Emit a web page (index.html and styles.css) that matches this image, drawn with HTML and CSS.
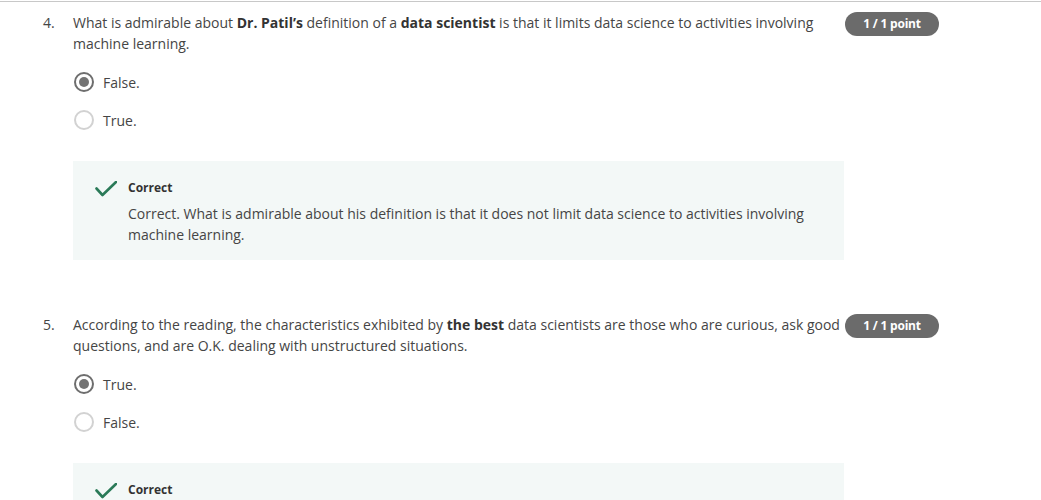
FILE: index.html
```html
<!DOCTYPE html>
<html>
<head>
<meta charset="utf-8">
<link rel="stylesheet" href="styles.css">
</head>
<body>
<div class="page">
  <section class="question">
    <div class="q-head">
      <div class="q-num">4.</div>
      <div class="q-text">What is admirable about <b>Dr. Patil’s</b> definition of a <b>data scientist</b> is that it limits data science to activities involving machine learning.</div>
      <div class="badge">1 / 1 point</div>
    </div>
    <div class="options">
      <div class="option"><span class="radio checked"></span><span>False.</span></div>
      <div class="option"><span class="radio"></span><span>True.</span></div>
    </div>
    <div class="feedback">
      <svg class="check" width="22" height="16" viewBox="0 0 22 16"><path d="M1.5 7.5 L7.5 14 L21 1" fill="none" stroke="#2a7a58" stroke-width="2.6" stroke-linecap="round" stroke-linejoin="round"/></svg>
      <div class="fb-body">
        <div class="fb-label">Correct</div>
        <div class="fb-text">Correct. What is admirable about his definition is that it does not limit data science to activities involving machine learning.</div>
      </div>
    </div>
  </section>
  <section class="question">
    <div class="q-head">
      <div class="q-num">5.</div>
      <div class="q-text">According to the reading, the characteristics exhibited by <b>the best</b> data scientists are those who are curious, ask good questions, and are O.K. dealing with unstructured situations.</div>
      <div class="badge">1 / 1 point</div>
    </div>
    <div class="options">
      <div class="option"><span class="radio checked"></span><span>True.</span></div>
      <div class="option"><span class="radio"></span><span>False.</span></div>
    </div>
    <div class="feedback">
      <svg class="check" width="22" height="16" viewBox="0 0 22 16"><path d="M1.5 7.5 L7.5 14 L21 1" fill="none" stroke="#2a7a58" stroke-width="2.6" stroke-linecap="round" stroke-linejoin="round"/></svg>
      <div class="fb-body">
        <div class="fb-label">Correct</div>
      </div>
    </div>
  </section>
</div>
</body>
</html>
```

FILE: styles.css
```css
html, body {
  margin: 0;
  padding: 0;
  background: #fff;
}
body {
  font-family: "Open Sans", "Liberation Sans", sans-serif;
  color: #454545;
  font-size: 14px;
  line-height: 21px;
  overflow: hidden;
  height: 500px;
}
.page {
  border-top: 1px solid #c8c8c8;
  margin-top: 1px;
  padding-top: 10px;
}
.question {
  padding-left: 43px;
  margin-bottom: 54px;
}
.q-head {
  display: flex;
  align-items: flex-start;
}
.q-num {
  width: 30px;
  flex: none;
}
.q-text {
  width: 768px;
  flex: none;
}
.q-text b {
  font-weight: 700;
  color: #333;
}
.badge {
  flex: none;
  margin-left: 4px;
  width: 94px;
  height: 24px;
  border-radius: 12px;
  background: #6b6b6b;
  color: #fff;
  font-weight: 700;
  font-size: 12px;
  line-height: 24px;
  text-align: center;
  letter-spacing: -0.2px;
}
.options {
  margin-left: 31px;
  margin-top: 18px;
  display: flex;
  flex-direction: column;
  gap: 18px;
}
.option {
  display: flex;
  align-items: center;
  height: 20px;
  gap: 9px;
}
.radio {
  box-sizing: border-box;
  width: 20px;
  height: 20px;
  border-radius: 50%;
  border: 2px solid #d2d2d2;
  display: flex;
  align-items: center;
  justify-content: center;
  flex: none;
}
.radio.checked {
  border: 2px solid #6e6e6e;
}
.radio.checked::after {
  content: "";
  width: 10px;
  height: 10px;
  border-radius: 50%;
  background: #737373;
}
.feedback {
  margin-left: 30px;
  margin-top: 31px;
  width: 771px;
  box-sizing: border-box;
  background: #f3f8f7;
  padding: 18px 24px 15px 22px;
  display: flex;
  align-items: flex-start;
  gap: 11px;
}
.check {
  flex: none;
  margin-top: 2px;
}
.fb-label {
  font-size: 12px;
  font-weight: 700;
  line-height: 18px;
  color: #333;
  margin-bottom: 6px;
}
.fb-text {
  line-height: 21px;
}
```
